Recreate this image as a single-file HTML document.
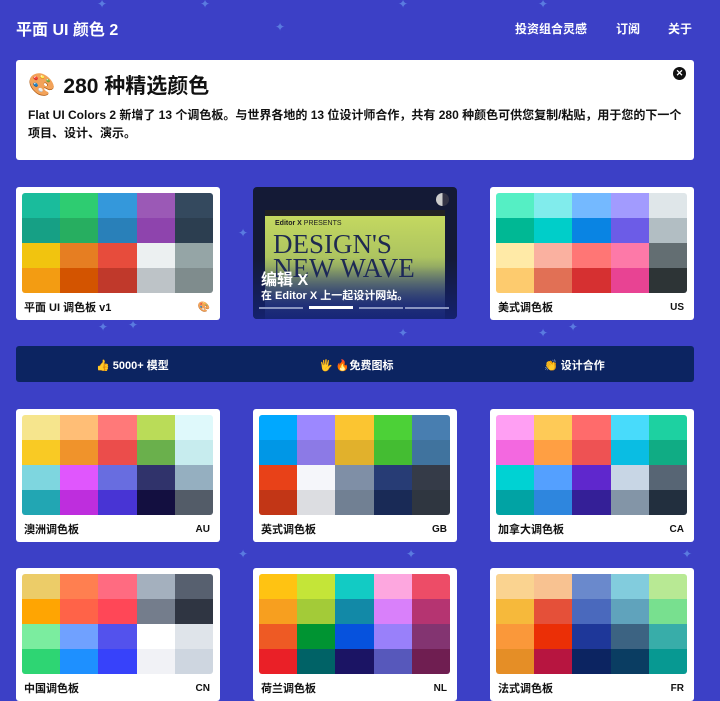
<!DOCTYPE html>
<html><head><meta charset="utf-8"><style>
*{margin:0;padding:0;box-sizing:border-box}
body{width:720px;height:688px;overflow:hidden;background:#3c40c6;font-family:"Liberation Sans","Noto Sans CJK SC",sans-serif;position:relative;color:#111}
.hdr{position:absolute;top:16px;left:16px;color:#fff;font-weight:bold;font-size:16px}
.nav{position:absolute;top:20px;color:#fff;font-weight:bold;font-size:12px}
.info{position:absolute;left:16px;top:60px;width:678px;height:100px;background:#fff;border-radius:3px}
.info h1{position:absolute;left:12px;top:10px;font-size:21px;font-weight:bold;display:flex;align-items:center}
.info p{position:absolute;left:12px;top:46px;width:660px;font-size:12px;font-weight:bold;line-height:18px}
.x{position:absolute;right:8px;top:7px;width:13px;height:13px;border-radius:50%;background:#111;color:#fff;font-size:9px;line-height:13px;text-align:center;font-weight:bold}
.card{position:absolute;width:204px;height:133px;background:#fff;border-radius:3px}
.grid{position:absolute;left:6px;top:6px;width:191px;height:100px;display:grid;grid-template-columns:repeat(5,1fr);grid-template-rows:repeat(4,1fr);border-radius:3px;overflow:hidden}
.lbl{position:absolute;left:8px;top:112px;font-size:11px;font-weight:bold}
.cc{position:absolute;right:10px;top:115px;font-size:10px;font-weight:bold}
.ad{position:absolute;left:253px;top:187px;width:204px;height:132px;border-radius:4px;background:#141a36;overflow:hidden}
.banner{position:absolute;left:16px;top:346px;width:678px;height:36px;background:#0c2461;border-radius:3px;color:#fff;font-size:11px;font-weight:bold}
.banner span{position:absolute;top:11px}
.sp{position:absolute;color:#5a7be0;font-size:12px}
</style></head><body>
<div class="sp" style="left:97px;top:-3px">✦</div><div class="sp" style="left:200px;top:-3px">✦</div><div class="sp" style="left:275px;top:20px">✦</div><div class="sp" style="left:398px;top:-3px">✦</div><div class="sp" style="left:538px;top:-3px">✦</div>
<div class="sp" style="left:238px;top:226px">✦</div><div class="sp" style="left:98px;top:320px">✦</div><div class="sp" style="left:128px;top:318px">✦</div><div class="sp" style="left:398px;top:326px">✦</div><div class="sp" style="left:538px;top:326px">✦</div><div class="sp" style="left:568px;top:320px">✦</div><div class="sp" style="left:238px;top:547px">✦</div><div class="sp" style="left:406px;top:547px">✦</div><div class="sp" style="left:682px;top:547px">✦</div>
<div class="hdr">平面 UI 颜色 2</div>
<div class="nav" style="left:515px">投资组合灵感</div>
<div class="nav" style="left:616px">订阅</div>
<div class="nav" style="left:668px">关于</div>
<div class="info"><h1><span style="font-size:22px;margin-right:8px">🎨</span>280 种精选颜色</h1>
<div class="x">✕</div>
<p>Flat UI Colors 2 新增了 13 个调色板。与世界各地的 13 位设计师合作，共有 280 种颜色可供您复制/粘贴，用于您的下一个项目、设计、演示。</p></div>

<div class="ad">
<div style="position:absolute;left:12px;top:23px;width:180px;height:118px;background:linear-gradient(#c4d860,#a8c060 45%,#3a4a78 80%,#1b2a70);border-top:6px solid #222">
<div style="position:absolute;left:10px;top:4px;font-size:7px;font-weight:bold;color:#222">Editor X <span style="font-weight:normal">PRESENTS</span></div>
<div style="position:absolute;left:8px;top:16px;font-family:'Liberation Serif',serif;font-size:27px;line-height:24px;color:#1f2a50">DESIGN'S<br>NEW WAVE</div></div>
<div style="position:absolute;left:0;top:70px;width:204px;height:62px;background:linear-gradient(rgba(20,30,90,0),rgba(20,35,120,.85))"></div>
<div style="position:absolute;left:8px;top:79px;color:#fff;font-size:16px;font-weight:bold">编辑 X</div>
<div style="position:absolute;left:8px;top:100px;color:#fff;font-size:11px;font-weight:bold">在 Editor X 上一起设计网站。</div>
<div style="position:absolute;left:6px;top:120px;width:44px;height:2px;background:#8a95c0"></div>
<div style="position:absolute;left:56px;top:119px;width:44px;height:3px;background:#fff"></div>
<div style="position:absolute;left:106px;top:120px;width:44px;height:2px;background:#8a95c0"></div>
<div style="position:absolute;left:152px;top:120px;width:44px;height:2px;background:#8a95c0"></div>
<div style="position:absolute;left:183px;top:6px;width:13px;height:13px;border-radius:50%;background:linear-gradient(90deg,#ccc 50%,#334 50%)"></div>
</div>

<div class="banner"><span style="left:80px">👍 5000+ 模型</span><span style="left:303px">🖐 🔥免费图标</span><span style="left:528px">👏 设计合作</span></div>

<div id="cards"></div>
<script>
const P=[
[16,187,"平面 UI 调色板 v1","🎨","#1abc9c,#2ecc71,#3498db,#9b59b6,#34495e,#16a085,#27ae60,#2980b9,#8e44ad,#2c3e50,#f1c40f,#e67e22,#e74c3c,#ecf0f1,#95a5a6,#f39c12,#d35400,#c0392b,#bdc3c7,#7f8c8d"],
[490,187,"美式调色板","US","#55efc4,#81ecec,#74b9ff,#a29bfe,#dfe6e9,#00b894,#00cec9,#0984e3,#6c5ce7,#b2bec3,#ffeaa7,#fab1a0,#ff7675,#fd79a8,#636e72,#fdcb6e,#e17055,#d63031,#e84393,#2d3436"],
[16,409,"澳洲调色板","AU","#f6e58d,#ffbe76,#ff7979,#badc58,#dff9fb,#f9ca24,#f0932b,#eb4d4b,#6ab04c,#c7ecee,#7ed6df,#e056fd,#686de0,#30336b,#95afc0,#22a6b3,#be2edd,#4834d4,#130f40,#535c68"],
[253,409,"英式调色板","GB","#00a8ff,#9c88ff,#fbc531,#4cd137,#487eb0,#0097e6,#8c7ae6,#e1b12c,#44bd32,#40739e,#e84118,#f5f6fa,#7f8fa6,#273c75,#353b48,#c23616,#dcdde1,#718093,#192a56,#2f3640"],
[490,409,"加拿大调色板","CA","#ff9ff3,#feca57,#ff6b6b,#48dbfb,#1dd1a1,#f368e0,#ff9f43,#ee5253,#0abde3,#10ac84,#00d2d3,#54a0ff,#5f27cd,#c8d6e5,#576574,#01a3a4,#2e86de,#341f97,#8395a7,#222f3e"],
[16,568,"中国调色板","CN","#eccc68,#ff7f50,#ff6b81,#a4b0be,#57606f,#ffa502,#ff6348,#ff4757,#747d8c,#2f3542,#7bed9f,#70a1ff,#5352ed,#ffffff,#dfe4ea,#2ed573,#1e90ff,#3742fa,#f1f2f6,#ced6e0"],
[253,568,"荷兰调色板","NL","#FFC312,#C4E538,#12CBC4,#FDA7DF,#ED4C67,#F79F1F,#A3CB38,#1289A7,#D980FA,#B53471,#EE5A24,#009432,#0652DD,#9980FA,#833471,#EA2027,#006266,#1B1464,#5758BB,#6F1E51"],
[490,568,"法式调色板","FR","#fad390,#f8c291,#6a89cc,#82ccdd,#b8e994,#f6b93b,#e55039,#4a69bd,#60a3bc,#78e08f,#fa983a,#eb2f06,#1e3799,#3c6382,#38ada9,#e58e26,#b71540,#0c2461,#0a3d62,#079992"]];
let h="";
for(const [x,y,l,c,cols] of P){h+=`<div class="card" style="left:${x}px;top:${y}px"><div class="grid">${cols.split(",").map(k=>`<div style="background:${k}"></div>`).join("")}</div><div class="lbl">${l}</div><div class="cc">${c}</div></div>`;}
document.getElementById("cards").innerHTML=h;
</script>
</body></html>
